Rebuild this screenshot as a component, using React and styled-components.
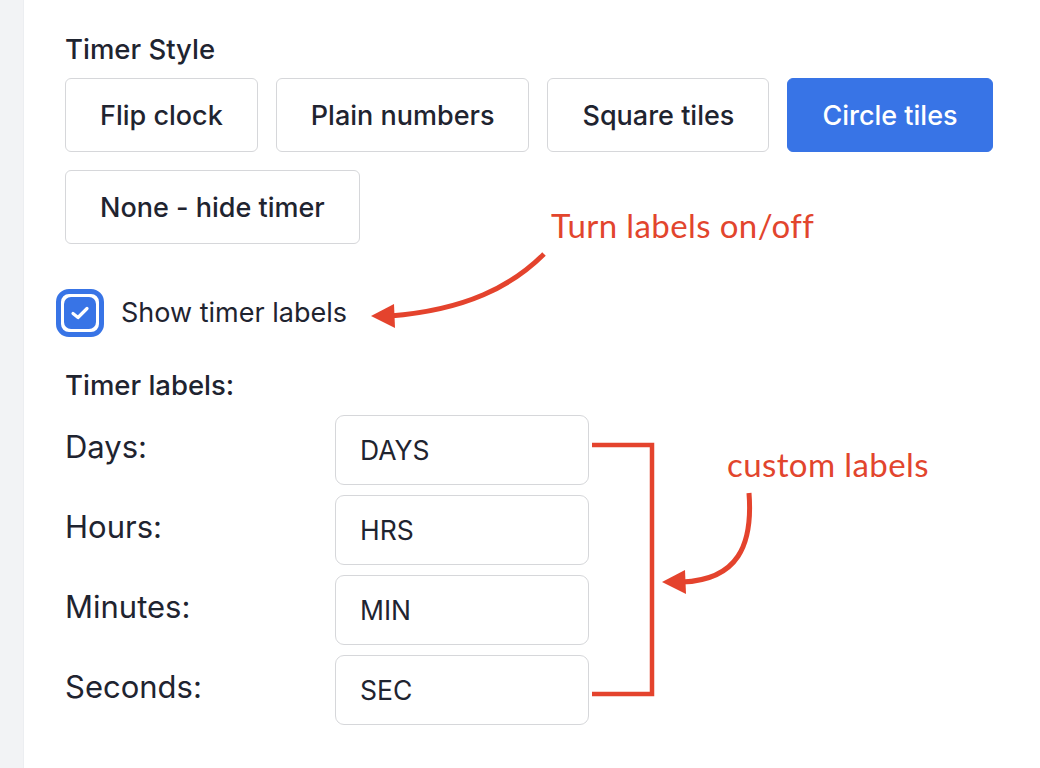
import React from 'react';
import styled, { createGlobalStyle } from 'styled-components';

const GlobalStyle = createGlobalStyle`
  html, body {
    margin: 0;
    padding: 0;
    background: #ffffff;
  }
  body {
    font-family: Inter, "Noto Sans", "Liberation Sans", sans-serif;
    color: #1f2430;
  }
  * {
    box-sizing: border-box;
  }
`;

const Page = styled.div`
  position: relative;
  display: flex;
  width: 1040px;
  height: 768px;
  overflow: hidden;
`;

const SideStrip = styled.div`
  width: 24px;
  flex-shrink: 0;
  background: #f2f3f5;
  border-right: 1px solid #eceef1;
`;

const Main = styled.div`
  flex: 1;
  padding: 33px 0 0 41px;
`;

const SectionTitle = styled.div`
  font-size: 27.5px;
  font-weight: 500;
  line-height: 32px;
  margin-top: ${props => props.top || 0}px;
  margin-bottom: ${props => props.gap || 0}px;
`;

const StyleOptions = styled.div`
  display: flex;
  flex-wrap: wrap;
  gap: 18px;
  width: 940px;
`;

const OptionButton = styled.button`
  height: 74px;
  padding: 0 34px;
  border-radius: 6px;
  font-family: inherit;
  font-size: 27px;
  font-weight: 500;
  cursor: pointer;
  border: 1.5px solid ${props => (props.active ? '#3874e6' : '#d6d7da')};
  background: ${props => (props.active ? '#3874e6' : '#ffffff')};
  color: ${props => (props.active ? '#ffffff' : '#1f2430')};
`;

const CheckRow = styled.label`
  display: flex;
  align-items: center;
  gap: 17px;
  margin: 45px 0 0 -9px;
  font-size: 27px;
  line-height: 48px;
`;

const CheckRing = styled.span`
  width: 48px;
  height: 48px;
  border: 5px solid #3874e6;
  border-radius: 13px;
  padding: 3px;
  display: flex;
`;

const CheckBox = styled.span`
  flex: 1;
  background: #3874e6;
  border-radius: 7px;
  display: flex;
  align-items: center;
  justify-content: center;
`;

const LabelsGrid = styled.div`
  display: grid;
  grid-template-columns: 270px 254px;
  row-gap: 10px;
  align-items: center;
  margin-top: 14px;
`;

const FieldLabel = styled.div`
  font-size: 31px;
  line-height: 36px;
  margin-top: -6px;
`;

const TextField = styled.input`
  height: 70px;
  width: 254px;
  padding: 0 24px;
  border: 1.5px solid #d6d7da;
  border-radius: 9px;
  font-family: inherit;
  font-size: 26.5px;
  color: #1f2430;
  background: #ffffff;
  outline: none;
`;

const Note = styled.div`
  position: absolute;
  left: ${props => props.x}px;
  top: ${props => props.y}px;
  font-family: Lato, "Open Sans", "Liberation Sans", sans-serif;
  font-size: 33px;
  font-weight: 400;
  color: #e2452d;
  white-space: nowrap;
  letter-spacing: 0.4px;
`;

const Overlay = styled.svg`
  position: absolute;
  left: 0;
  top: 0;
  pointer-events: none;
`;

const styles = ['Flip clock', 'Plain numbers', 'Square tiles', 'Circle tiles', 'None - hide timer'];

const labels = [
  { name: 'Days:', value: 'DAYS' },
  { name: 'Hours:', value: 'HRS' },
  { name: 'Minutes:', value: 'MIN' },
  { name: 'Seconds:', value: 'SEC' },
];

function Annotations() {
  const red = '#e4432d';
  return (
    <Overlay width="1040" height="768" viewBox="0 0 1040 768">
      {/* arrow to checkbox */}
      <path d="M544 254 C512 286 466 310 390 316" fill="none" stroke={red} strokeWidth="5" />
      <polygon points="371,316 394,304 395,328" fill={red} />
      {/* bracket */}
      <path d="M592 445 H652 V694 H592" fill="none" stroke={red} strokeWidth="4.5" />
      {/* arrow to bracket */}
      <path d="M749 493 C753 545 738 580 682 582" fill="none" stroke={red} strokeWidth="5" />
      <polygon points="662,582 685,570 686,594" fill={red} />
    </Overlay>
  );
}

export default function App() {
  return (
    <>
      <GlobalStyle />
      <Page>
        <SideStrip />
        <Main>
          <SectionTitle gap={13}>Timer Style</SectionTitle>
          <StyleOptions>
            {styles.map(s => (
              <OptionButton key={s} active={s === 'Circle tiles'}>
                {s}
              </OptionButton>
            ))}
          </StyleOptions>

          <CheckRow>
            <CheckRing>
              <CheckBox>
                <svg width="20" height="16" viewBox="0 0 20 16">
                  <path d="M3 8.5 L8 12.5 L17 3.5" fill="none" stroke="#fff" strokeWidth="3.2" strokeLinecap="round" strokeLinejoin="round" />
                </svg>
              </CheckBox>
            </CheckRing>
            Show timer labels
          </CheckRow>

          <SectionTitle top={32}>Timer labels:</SectionTitle>
          <LabelsGrid>
            {labels.map(l => (
              <React.Fragment key={l.name}>
                <FieldLabel>{l.name}</FieldLabel>
                <TextField defaultValue={l.value} />
              </React.Fragment>
            ))}
          </LabelsGrid>
        </Main>
        <Annotations />
        <Note x={551} y={205}>Turn labels on/off</Note>
        <Note x={727} y={444}>custom labels</Note>
      </Page>
    </>
  );
}
